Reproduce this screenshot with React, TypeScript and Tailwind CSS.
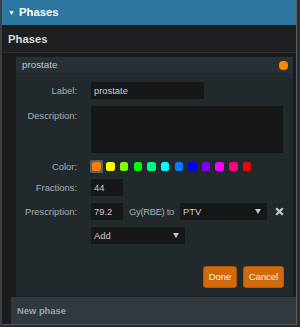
const swatches = [
  "#ff7f00",
  "#ffff00",
  "#80ff00",
  "#00ff00",
  "#00ff80",
  "#00ffff",
  "#0080ff",
  "#0000ff",
  "#8000ff",
  "#ff00ff",
  "#ff0080",
  "#ff0000",
];

function Arrow() {
  return (
    <svg width="6" height="5" viewBox="0 0 6 5" className="shrink-0">
      <path d="M0 0 L6 0 L3 5 Z" fill="#c4c7ca" />
    </svg>
  );
}

export default function App() {
  return (
    <div className="w-[300px] h-[327px] bg-[#2a2e31] font-['Liberation_Sans',Arial,sans-serif] text-[9.4px] leading-none">
      <div className="w-[297px] h-[325px] flex flex-col border-l-2 border-l-[#3b4043] border-r border-r-[#5b6165] border-b border-b-[#50565a] bg-[#1a1c1e]">
        <div className="h-[25px] shrink-0 bg-[#2b779f] flex items-center pl-[6px]">
          <span className="text-[7px] text-white w-[11px]">▼</span>
          <span className="text-[11.3px] font-bold text-white">Phases</span>
        </div>
        <div className="h-[28px] shrink-0 bg-[#1d1f21] border-b border-b-[#2d3134] flex items-center pl-[6px] pt-[2px]">
          <span className="text-[11.3px] font-bold text-[#d8dadc]">Phases</span>
        </div>
        <div className="flex-1 pt-[4px] pl-[14px] pr-[3px] flex flex-col min-h-0">
          <div className="flex-1 bg-[#22292c] flex flex-col">
            <div className="h-[16px] bg-[#283035] flex items-center justify-between pl-[6px] pr-[5px]">
              <span className="text-[#b9c6cf] text-[9.8px]">prostate</span>
              <span className="w-[9px] h-[9px] rounded-[4px] bg-[#ff8400]" />
            </div>
            <div className="flex flex-col pt-[9px]">
              <div className="flex items-center gap-[14px]">
                <span className="w-[61px] text-right text-[#a9aeb2]">Label:</span>
                <div className="w-[113px] h-[17px] bg-[#151719] text-[#c9cccf] pl-[3px] flex items-center">
                  prostate
                </div>
              </div>
              <div className="flex items-start gap-[14px] mt-[7px]">
                <span className="w-[61px] text-right text-[#a9aeb2] pt-[5px]">Description:</span>
                <div className="w-[192px] h-[47px] bg-[#151719]" />
              </div>
              <div className="flex items-center gap-[14px] mt-[7px]">
                <span className="w-[61px] text-right text-[#a9aeb2]">Color:</span>
                <div className="flex -ml-px">
                  {swatches.map((c, i) => (
                    <div
                      key={c}
                      className={
                        i === 0
                          ? "w-[13px] mr-[0.67px] h-[13px] flex items-center justify-center rounded-[2px] bg-[#5b6064]"
                          : "w-[13.67px] h-[13px] flex items-center justify-center"
                      }
                    >
                      <span
                        className="w-[8.5px] h-[8.5px] rounded-[2.5px]"
                        style={{ backgroundColor: c }}
                      />
                    </div>
                  ))}
                </div>
              </div>
              <div className="flex items-center gap-[14px] mt-[6px]">
                <span className="w-[61px] text-right text-[#a9aeb2]">Fractions:</span>
                <div className="w-[32px] h-[17px] bg-[#151719] text-[#c9cccf] pl-[3px] flex items-center">
                  44
                </div>
              </div>
              <div className="flex items-center gap-[14px] mt-[7px]">
                <span className="w-[61px] text-right text-[#a9aeb2]">Prescription:</span>
                <div className="flex items-center">
                  <div className="w-[32px] h-[17px] bg-[#151719] text-[#c9cccf] pl-[3px] flex items-center">
                    79.2
                  </div>
                  <span className="ml-[6px] text-[#a9aeb2] tracking-[-0.3px]">Gy(RBE) to</span>
                  <div className="ml-[6px] w-[87px] h-[17px] bg-[#151719] text-[#c9cccf] pl-[3px] pr-[6px] flex items-center justify-between">
                    <span>PTV</span>
                    <Arrow />
                  </div>
                  <svg width="9" height="9" viewBox="0 0 9 9" className="ml-[8px]">
                    <path d="M1.2 1.2 L7.8 7.8 M7.8 1.2 L1.2 7.8" stroke="#c3c7ca" strokeWidth="2.2" />
                  </svg>
                </div>
              </div>
              <div className="flex items-center gap-[14px] mt-[7px]">
                <span className="w-[61px]" />
                <div className="w-[94px] h-[17px] bg-[#151719] text-[#c9cccf] pl-[3px] pr-[6px] flex items-center justify-between">
                  <span>Add</span>
                  <Arrow />
                </div>
              </div>
              <div className="flex justify-end gap-[6px] mt-[22px] pr-[9px]">
                <button className="w-[34px] h-[22px] rounded-[3px] bg-[#d2690a] border border-[#b25807] text-[#fff4e6] flex items-center justify-center">
                  Done
                </button>
                <button className="w-[41px] h-[22px] rounded-[3px] bg-[#d2690a] border border-[#b25807] text-[#fff4e6] flex items-center justify-center">
                  Cancel
                </button>
              </div>
            </div>
          </div>
        </div>
        <div className="h-[27px] shrink-0 mt-px ml-[9px] bg-[#2f393e] flex items-center pl-[6px]">
          <span className="font-bold text-[#9ba1a5]">New phase</span>
        </div>
      </div>
    </div>
  );
}
